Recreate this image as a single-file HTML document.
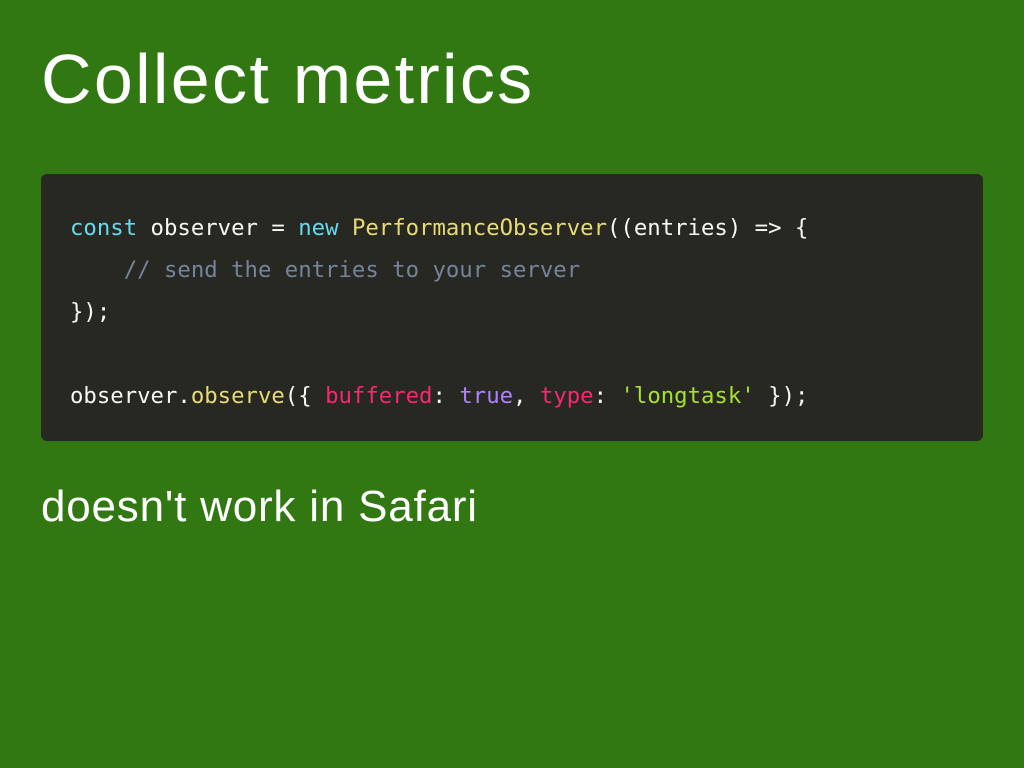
<!DOCTYPE html>
<html><head><style>
html,body{margin:0;padding:0}
body{width:1024px;height:768px;background:#317813;overflow:hidden;position:relative;font-family:"Liberation Sans",sans-serif;color:#fff}
h1{position:absolute;left:41px;top:34px;margin:0;font-weight:normal;font-size:70px;line-height:90px;letter-spacing:2.3px}
pre{position:absolute;left:41px;top:174px;width:942px;height:267px;box-sizing:border-box;margin:0;background:#272822;border-radius:6px;padding:33px 0 0 29px;font-family:"DejaVu Sans Mono",monospace;font-size:22.3px;line-height:42px;color:#f8f8f2}
.k{color:#66d9ef}.f{color:#e6db74}.c{color:#75849a}.p{color:#f92672}.b{color:#ae81ff}.s{color:#a6e22e}
p{position:absolute;left:41px;top:480px;margin:0;font-size:44px;line-height:54px;letter-spacing:0.8px}
</style></head><body>
<h1>Collect metrics</h1>
<pre><span class="k">const</span> observer = <span class="k">new</span> <span class="f">PerformanceObserver</span>((entries) =&gt; {
    <span class="c">// send the entries to your server</span>
});

observer.<span class="f">observe</span>({ <span class="p">buffered</span>: <span class="b">true</span>, <span class="p">type</span>: <span class="s">'longtask'</span> });</pre>
<p>doesn't work in Safari</p>
</body></html>
